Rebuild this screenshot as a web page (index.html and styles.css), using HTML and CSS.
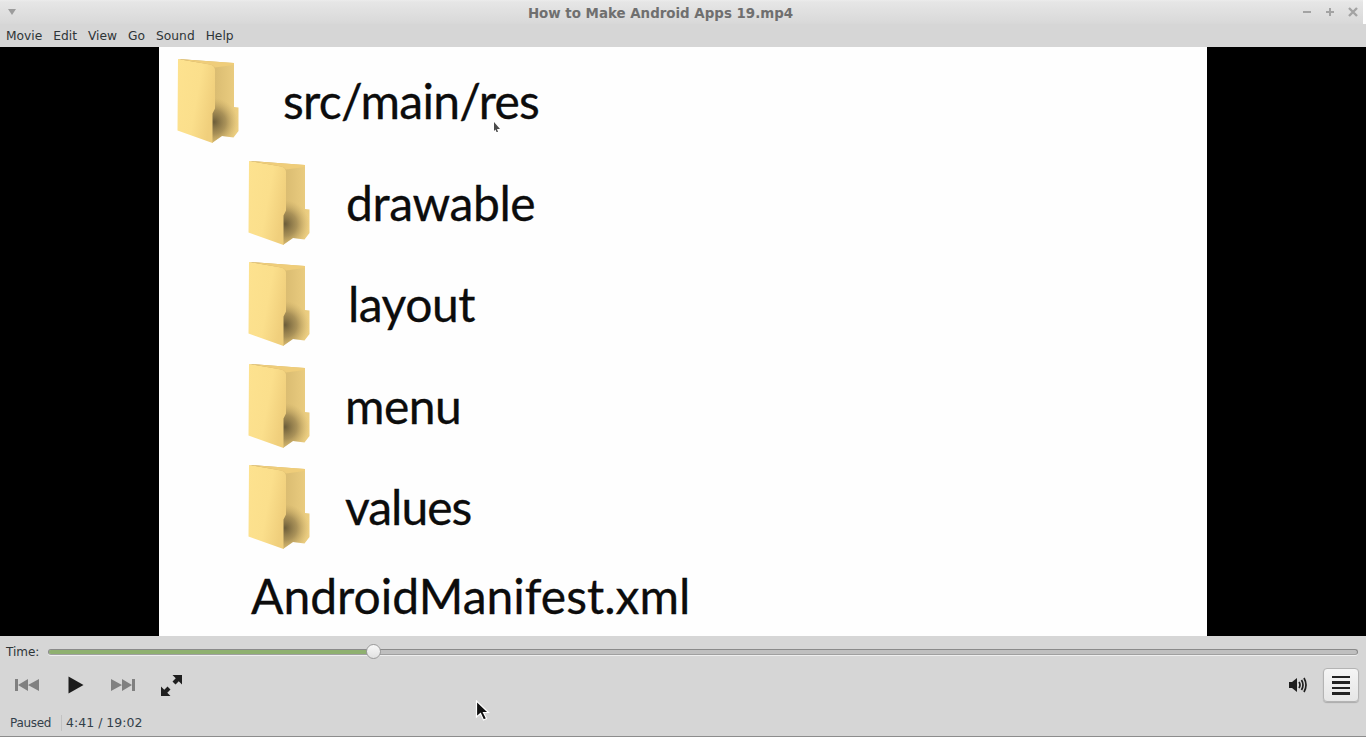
FILE: index.html
```html
<!DOCTYPE html>
<html lang="en">
<head>
  <meta charset="UTF-8" />
  <title>How to Make Android Apps 19.mp4</title>
  <link rel="stylesheet" href="styles.css">
</head>
<body>
  <svg class="defs" width="0" height="0">
    <defs>
      <linearGradient id="front" x1="0" y1="0" x2="1" y2="0.4">
        <stop offset="0" stop-color="#fde28f"/>
        <stop offset="0.6" stop-color="#fbdf8c"/>
        <stop offset="1" stop-color="#f0cf7c"/>
      </linearGradient>
      <linearGradient id="back" x1="0" y1="0" x2="1" y2="0">
        <stop offset="0" stop-color="#a88e52"/>
        <stop offset="0.45" stop-color="#d3b56b"/>
        <stop offset="1" stop-color="#edcf82"/>
      </linearGradient>
      <radialGradient id="shade" gradientUnits="userSpaceOnUse" cx="37" cy="64" r="24">
        <stop offset="0" stop-color="#5f5233" stop-opacity="0.9"/>
        <stop offset="0.5" stop-color="#7d6a40" stop-opacity="0.55"/>
        <stop offset="1" stop-color="#b89c5a" stop-opacity="0"/>
      </radialGradient>
      <symbol id="folder" viewBox="0 0 62 85">
        <path d="M1 1L57 5V49L61.500 49.500V73L56.500 79.500L45 78L35 85V40H38V12Z" fill="url(#back)"/>
        <path d="M35 12L57 5V49L61.500 49.500V73L56.500 79.500L45 78L35 85Z" fill="url(#shade)"/>
        <path d="M1 1L33 6.500Q38 7.500 38 12.500V50.500L35.500 55.500V85L0.500 72.500Z" fill="url(#front)"/>
        <path d="M1 1L57 5V7L38 9.500Q36.500 7 33 6.500Z" fill="#efcd7a"/>
      </symbol>
    </defs>
  </svg>

  <div class="window">
    <header class="titlebar">
      <span class="window-menu"></span>
      <h1 class="title">How to Make Android Apps 19.mp4</h1>
      <div class="window-btns">
        <svg width="12" height="12" viewBox="0 0 12 12"><path d="M2 6H10" stroke="#a3a3a3" stroke-width="2"/></svg>
        <svg width="12" height="12" viewBox="0 0 12 12"><path d="M2 6H10M6 2V10" stroke="#a3a3a3" stroke-width="2"/></svg>
        <svg width="12" height="12" viewBox="0 0 12 12"><path d="M2 2L10 10M10 2L2 10" stroke="#a3a3a3" stroke-width="2.400"/></svg>
      </div>
    </header>

    <nav class="menubar">
      <a>Movie</a>
      <a>Edit</a>
      <a>View</a>
      <a>Go</a>
      <a>Sound</a>
      <a>Help</a>
    </nav>

    <main class="video">
      <div class="slide">
        <div class="row row-root">
          <svg class="folder"><use href="#folder"/></svg>
          <span>src/main/res</span>
        </div>
        <div class="row row-drawable">
          <svg class="folder"><use href="#folder"/></svg>
          <span>drawable</span>
        </div>
        <div class="row row-layout">
          <svg class="folder"><use href="#folder"/></svg>
          <span>layout</span>
        </div>
        <div class="row">
          <svg class="folder"><use href="#folder"/></svg>
          <span>menu</span>
        </div>
        <div class="row row-values">
          <svg class="folder"><use href="#folder"/></svg>
          <span>values</span>
        </div>
        <div class="manifest">AndroidManifest.xml</div>
        <svg class="slide-cursor" width="8" height="11" viewBox="0 0 8 11"><path d="M1 0L7 7H4L5 10L3.500 10L2.500 7.500L1 9Z" fill="#4a4a4a"/></svg>
      </div>
    </main>

    <footer class="controls">
      <div class="time-row">
        <span>Time:</span>
        <div class="seek">
          <div class="seek-fill"></div>
          <div class="seek-knob"></div>
        </div>
      </div>

      <div class="btn-row">
        <svg class="btn-prev" width="24" height="14" viewBox="0 0 24 14"><path d="M0 1H3V13H0ZM3 7L13 1V13ZM13 7L24 1V13Z" fill="#808080"/></svg>
        <svg class="btn-play" width="16" height="18" viewBox="0 0 16 18"><path d="M0.500 0.500L15.500 9L0.500 17.500Z" fill="#1c1c1c"/></svg>
        <svg class="btn-next" width="24" height="14" viewBox="0 0 24 14"><path d="M24 1H21V13H24ZM21 7L11 1V13ZM11 7L0 1V13Z" fill="#808080"/></svg>
        <svg class="btn-full" width="23" height="23" viewBox="0 0 23 23"><path d="M12.500 1H22V10.500L18.750 7.250L15.500 10.500L12.500 7.500L15.750 4.250Z" fill="#1f1f1f"/><path d="M10.500 22H1V12.500L4.250 15.750L7.500 12.500L10.500 15.500L7.250 18.750Z" fill="#1f1f1f"/></svg>
        <div class="spacer"></div>
        <svg class="btn-vol" width="20" height="18" viewBox="0 0 20 18"><path d="M1 6H4L9 2V16L4 12H1Z" fill="#1f1f1f"/><path d="M11 6Q13 9 11 12M13.500 4Q16.500 9 13.500 14M16 2Q20 9 16 16" fill="none" stroke="#1f1f1f" stroke-width="1.700"/></svg>
        <button class="btn-list">
          <span></span><span></span><span></span><span></span>
        </button>
      </div>

      <div class="status-row">
        <span class="status">Paused</span>
        <span class="time-text">4:41 / 19:02</span>
      </div>

      <svg class="mouse" width="15" height="22" viewBox="0 0 15 22"><path d="M1.500 1V17L5.500 13.500L8.500 20L11.500 18.500L8.500 12.500H13.500Z" fill="#111" stroke="#fff" stroke-width="1.200"/></svg>
    </footer>
  </div>
</body>
</html>
```

FILE: styles.css
```css
body {
  margin: 0;
  font-family: "DejaVu Sans", sans-serif;
  font-size: 12px;
  color: #2e3436;
  overflow: hidden;
  background: #fff;
}
.defs {
  position: absolute;
}
.window {
  display: flex;
  flex-direction: column;
  width: 1366px;
  height: 737px;
}

/* title bar */
.titlebar {
  display: flex;
  align-items: center;
  height: 24px;
  margin-right: 3px;
  padding: 0 4px 0 8px;
  background: linear-gradient(#ececec 0, #e6e6e6 2px, #d8d8d8 100%);
}
.window-menu {
  width: 0;
  height: 0;
  border-left: 4.500px solid transparent;
  border-right: 4.500px solid transparent;
  border-top: 6px solid #9c9c9c;
}
.title {
  flex: 1;
  margin: 2px 0 0;
  padding-left: 4px;
  text-align: center;
  font-size: 13.400px;
  font-weight: bold;
  color: #6f6f6f;
}
.window-btns {
  display: flex;
  gap: 11px;
}

/* menu bar */
.menubar {
  display: flex;
  align-items: center;
  gap: 11px;
  height: 23px;
  padding: 0 6px;
  background: #d6d6d6;
  font-size: 12.250px;
}

/* video area */
.video {
  display: flex;
  justify-content: center;
  height: 589px;
  background: #000;
}
.slide {
  position: relative;
  display: flex;
  flex-direction: column;
  gap: 16.500px;
  width: 1048px;
  padding: 11px 0 0 89px;
  box-sizing: border-box;
  background: #fefefe;
  font-family: Lato, sans-serif;
  font-size: 48px;
  letter-spacing: -0.500px;
  color: #0c0c0c;
  -webkit-text-stroke: 0.300px #0c0c0c;
}
.row {
  display: flex;
  align-items: center;
  gap: 35px;
  height: 85px;
}
.row-root {
  margin-left: -71px;
  gap: 44px;
  letter-spacing: -0.750px;
}
.row-drawable {
  gap: 36px;
  letter-spacing: -0.400px;
}
.row-layout {
  gap: 38px;
}
.row-values {
  letter-spacing: -1px;
}
.folder {
  width: 62px;
  height: 85px;
  flex: none;
}
.manifest {
  margin: 0 0 0 3px;
  line-height: 60px;
  letter-spacing: 0;
}
.slide-cursor {
  position: absolute;
  left: 334px;
  top: 75px;
}

/* controls */
.controls {
  position: relative;
  display: flex;
  flex-direction: column;
  height: 101px;
  box-sizing: border-box;
  border-bottom: 1px solid #8c8c8c;
  background: #d6d6d6;
}
.time-row {
  display: flex;
  align-items: center;
  gap: 9px;
  height: 30px;
  padding: 1px 8px 0 6px;
  box-sizing: border-box;
}
.seek {
  position: relative;
  flex: 1;
  height: 6px;
  box-sizing: border-box;
  border: 1px solid #8a8a8a;
  border-bottom-color: #a0a0a0;
  border-radius: 3px;
  background: #bfbfbf;
  box-shadow: 0 1px 0 #efefef;
}
.seek-fill {
  width: 326px;
  height: 100%;
  border-radius: 3px 0 0 3px;
  background: #8fb070;
}
.seek-knob {
  position: absolute;
  left: 317px;
  top: -6px;
  width: 15px;
  height: 15px;
  box-sizing: border-box;
  border: 1px solid #9a9a9a;
  border-radius: 50%;
  background: linear-gradient(#f8f8f8, #e2e2e2);
}
.btn-row {
  display: flex;
  align-items: center;
  height: 38px;
  padding: 0 7px 0 15px;
}
.btn-play {
  margin-left: 29px;
}
.btn-next {
  margin-left: 27px;
}
.btn-full {
  margin-left: 25px;
}
.spacer {
  flex: 1;
}
.btn-vol {
  margin-right: 15px;
}
.btn-list {
  display: flex;
  flex-direction: column;
  justify-content: center;
  gap: 3px;
  width: 36px;
  height: 34px;
  padding: 0 8px;
  border: 1px solid #b4b4b4;
  border-radius: 4px;
  background: linear-gradient(#f5f5f5, #e6e6e6);
  box-shadow: 0 1px 1px rgba(0,0,0,0.2);
}
.btn-list span {
  display: block;
  width: 18px;
  height: 2.500px;
  background: #222;
}
.status-row {
  display: flex;
  align-items: flex-start;
  height: 32px;
  padding: 11px 0 0 10px;
  box-sizing: border-box;
  color: #33404a;
}
.status {
  padding-right: 10px;
  border-right: 1px solid #c2c2c2;
  line-height: 16px;
  letter-spacing: -0.300px;
}
.time-text {
  padding-left: 4px;
  line-height: 16px;
  font-size: 12.500px;
}
.mouse {
  position: absolute;
  left: 475px;
  top: 64px;
}
```
